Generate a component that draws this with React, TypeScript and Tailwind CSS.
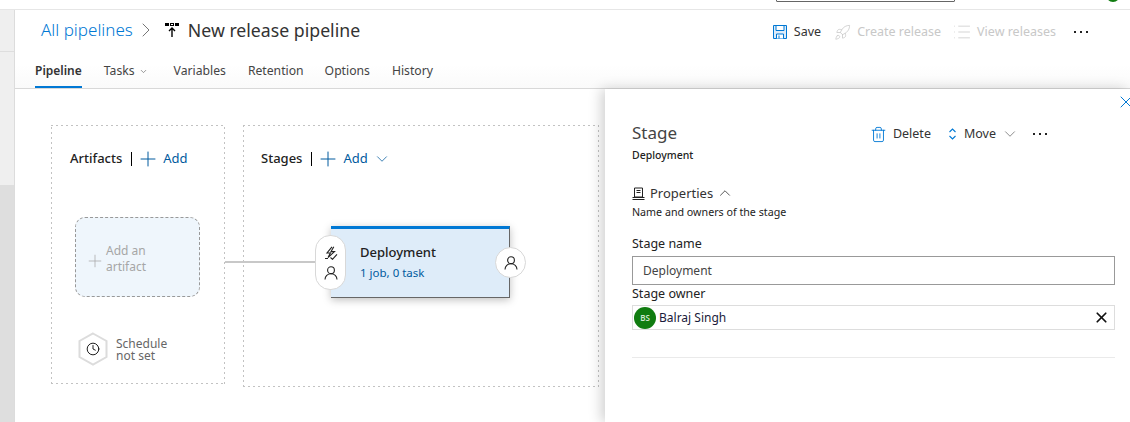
import { ChevronDown, ChevronUp, ChevronRight, Clock, List, Plus, Rocket, Trash2, X } from "lucide-react";

const tabs = ["Variables", "Retention", "Options", "History"];

// thin short dashes, finer than what border-dashed gives
const dashedBox =
  "[background:repeating-linear-gradient(90deg,#c2c2c2_0_2px,transparent_2px_5px)_top/100%_1px_no-repeat,repeating-linear-gradient(90deg,#c2c2c2_0_2px,transparent_2px_5px)_bottom/100%_1px_no-repeat,repeating-linear-gradient(0deg,#c2c2c2_0_2px,transparent_2px_5px)_left/1px_100%_no-repeat,repeating-linear-gradient(0deg,#c2c2c2_0_2px,transparent_2px_5px)_right/1px_100%_no-repeat]";

function PipelineIcon() {
  return (
    <svg width="14" height="14" viewBox="0 0 14 14" className="text-black">
      <path d="M0 0h4v3H0zM5 0h4v3H5zM10 0h4v3h-4z" fill="currentColor" />
      <path d="M6 1h2v1H6z" fill="#fff" />
      <path d="M7 14V5M4 8l3-3 3 3" fill="none" stroke="currentColor" strokeWidth="1.4" />
    </svg>
  );
}

function SaveIcon() {
  return (
    <svg width="14" height="14" viewBox="0 0 14 14" className="text-[#0078d4]">
      <path d="M.5.5h13v13H.5z" fill="#deecf9" stroke="currentColor" />
      <path d="M3 1v4.5h8V1M3.5 13.5V9h7v4.5" fill="#fff" stroke="currentColor" />
      <path d="M6 10.5v3" stroke="currentColor" />
    </svg>
  );
}

function Dots() {
  return (
    <svg width="14" height="2" viewBox="0 0 14 2" className="text-[#222]">
      <path d="M0 0h2v2H0zM6 0h2v2H6zM12 0h2v2h-2z" fill="currentColor" />
    </svg>
  );
}

function PersonIcon({ size = 14 }: { size?: number }) {
  return (
    <svg width={size} height={size} viewBox="0 0 14 14" fill="none" stroke="#222" strokeWidth="1.1">
      <circle cx="7" cy="4.2" r="3.4" />
      <path d="M1 13.5c0-3.4 2.6-5.8 6-5.8s6 2.4 6 5.8" />
    </svg>
  );
}

function TriggerIcon() {
  return (
    <svg width="14" height="14" viewBox="0 0 14 14" fill="none" stroke="#222" strokeWidth="1.1">
      <path d="M8 .8 3 7h3.4L4 11.5 10.5 5.6H7L9.8.8" />
      <path d="M1 12.5h3M6.5 11.5l2 1.8 4.5-5" />
    </svg>
  );
}

function ScheduleHex() {
  return (
    <div className="relative flex h-[34px] w-[30px] items-center justify-center">
      <svg width="30" height="34" viewBox="0 0 30 34" className="absolute inset-0">
        <path d="M15 1.5 28.5 9v16L15 32.5 1.5 25V9z" fill="#fff" stroke="#dcdcdc" strokeWidth="2" />
      </svg>
      <Clock size={14} strokeWidth={1.5} className="relative text-black" />
    </div>
  );
}

function AddButton({ chevron }: { chevron?: boolean }) {
  return (
    <>
      <span className="ml-[9px] h-[14px] w-px bg-black" />
      <Plus size={24} strokeWidth={1} className="ml-[4px] text-[#005a9e]" />
      <span className="ml-[3px] text-[#005a9e]">Add</span>
      {chevron && <ChevronDown size={18} strokeWidth={1} className="ml-[5px] text-[#005a9e]" />}
    </>
  );
}

function StageCard() {
  return (
    <div className="absolute left-[316px] top-[137px] h-[72px] w-[179px] border-r border-b border-[#666] border-t-[3px] border-t-[#0078d4] bg-[#deecf9] pl-[29px] pt-[14px] shadow-[0_2px_8px_rgba(0,0,0,0.25)]">
      <div className="text-[13px] font-medium leading-[18px] text-[#212121]">Deployment</div>
      <div className="mt-[4px] text-[11.5px] leading-[16px] text-[#005a9e]">1 job, 0 task</div>
      <div className="absolute left-[-16px] top-[6px] flex h-[55px] w-[31px] flex-col items-center justify-center gap-[6px] rounded-[15px] border border-[#d8d8d8] bg-white">
        <TriggerIcon />
        <PersonIcon />
      </div>
      <div className="absolute left-[164px] top-[18px] flex h-[31px] w-[31px] items-center justify-center rounded-full border border-[#d8d8d8] bg-white">
        <PersonIcon />
      </div>
    </div>
  );
}

function StagePanel() {
  return (
    <div className="absolute bottom-0 left-[590px] right-0 top-0 bg-white pl-[27px] pr-[15px] pt-[33px] text-[#333] shadow-[-4px_0_12px_rgba(0,0,0,0.18)]">
      <X size={20} strokeWidth={1.2} className="absolute right-[-6px] top-[3px] text-[#0078d4]" />
      <div className="flex items-start justify-between">
        <div>
          <div className="text-[17px] leading-[22px] text-[#444]">Stage</div>
          <div className="mt-[3px] text-[10.5px] font-medium leading-[16px] text-[#222]">Deployment</div>
        </div>
        <div className="mr-[68px] flex items-center pt-[1px] text-[12.5px] leading-[22px]">
          <Trash2 size={17} strokeWidth={1.3} className="text-[#0078d4]" />
          <span className="ml-[6px]">Delete</span>
          <svg width="9" height="12" viewBox="0 0 9 12" className="ml-[17px] text-[#0078d4]">
            <path d="M1.5 4 4.5 1l3 3M1.5 8l3 3 3-3" fill="none" stroke="currentColor" strokeWidth="1.1" />
          </svg>
          <span className="ml-[7px]">Move</span>
          <ChevronDown size={18} strokeWidth={0.9} className="ml-[5px] text-[#555]" />
          <span className="ml-[14px]"><Dots /></span>
        </div>
      </div>
      <div className="mt-[20px] flex items-center text-[13px] leading-[20px]">
        <svg width="13" height="13" viewBox="0 0 13 13" className="mr-[5px] text-[#222]">
          <path d="M2.5 1h8v9h-8zM4.5 3.5h4M4.5 5.5h4M.5 12.5h12M.5 10.5h12" fill="none" stroke="currentColor" />
        </svg>
        Properties
        <ChevronUp size={18} strokeWidth={1} className="ml-[3px] text-[#222]" />
      </div>
      <div className="mt-[1px] text-[10.7px] leading-[16px] text-[#222]">Name and owners of the stage</div>
      <div className="mt-[16px] text-[12.5px] leading-[16px] text-[#222]">Stage name</div>
      <div className="mt-[4px] flex h-[29px] items-center border border-[#999] pl-[10px] text-[12px] text-[#444]">Deployment</div>
      <div className="text-[12.5px] leading-[17px] text-[#222]">Stage owner</div>
      <div className="mt-[3px] flex h-[25px] items-center border border-[#ddd] pl-px pr-[4px] text-[12px] text-[#1a1a3a]">
        <span className="flex h-[22px] w-[22px] items-center justify-center rounded-full bg-[#107c10] text-[8px] font-semibold text-[#cfe6cf]">BS</span>
        <span className="ml-[3px]">Balraj Singh</span>
        <X size={17} strokeWidth={2.4} className="ml-auto text-[#111]" />
      </div>
      <div className="mt-[27px] h-px bg-[#eaeaea]" />
    </div>
  );
}

export default function App() {
  return (
    <div className="relative h-[422px] w-[1130px] overflow-hidden bg-white font-['Noto_Sans','Open_Sans',sans-serif]">
      <div className="relative h-[10px] border-b border-[#e6e6e6]">
        <div className="absolute left-[776px] top-[-4px] h-[6px] w-[179px] rounded-[1px] border border-[#666]" />
        <div className="absolute left-[1106px] top-[-12px] h-[14px] w-[14px] rounded-full bg-[#107c10]" />
      </div>
      <div className="flex h-[412px]">
        <div className="flex w-[15px] flex-col border-r border-[#dcdcdc] bg-[#efefef]">
          <div className="h-[42px] border-b border-[#dedede]" />
          <div className="h-[133px]" />
          <div className="grow bg-[#dedede]" />
        </div>
        <div className="min-w-0 grow">
          <div className="h-[79px] border-b border-[#d8d8d8] bg-gradient-to-b from-white from-70% to-[#fafafa]">
            <div className="flex h-[40px] items-center pl-[26px]">
              <span className="text-[17px] font-light text-[#0078d4]">All pipelines</span>
              <ChevronRight size={24} strokeWidth={0.9} className="ml-px text-[#666]" />
              <span className="ml-[7px]"><PipelineIcon /></span>
              <span className="ml-[9px] text-[17.7px] text-[#333]">New release pipeline</span>
              <div className="ml-auto mr-[42px] flex items-center pt-[4px] text-[12.5px]">
                <SaveIcon />
                <span className="ml-[7px] text-[#333]">Save</span>
                <Rocket size={17} strokeWidth={1.2} className="ml-[13px] text-[#ccc]" />
                <span className="ml-[6px] text-[#c8c8c8]">Create release</span>
                <List size={20} strokeWidth={1} className="ml-[11px] text-[#ccc]" />
                <span className="ml-[5px] text-[#c8c8c8]">View releases</span>
                <span className="ml-[18px]"><Dots /></span>
              </div>
            </div>
            <div className="flex h-[38px] items-center pl-[20px] pt-[4px] text-[12.2px] text-[#444]">
              <span className="relative flex h-full items-center text-[12px] font-semibold text-[#333]">
                Pipeline
                <span className="absolute bottom-0 left-0 right-0 h-[2px] bg-[#0078d4]" />
              </span>
              <span className="ml-[22px]">Tasks</span>
              <ChevronDown size={9} className="ml-[4px] text-[#777]" />
              <span className="ml-[26px]">{tabs[0]}</span>
              <span className="ml-[22px]">{tabs[1]}</span>
              <span className="ml-[21px]">{tabs[2]}</span>
              <span className="ml-[22px]">{tabs[3]}</span>
            </div>
          </div>
          <div className="relative h-[333px]">
            <div className="flex items-start gap-[18px] pl-[36px] pt-[36px]">
              <div className={`h-[259px] w-[174px] pl-[19px] pt-[22px] ${dashedBox}`}>
                <div className="flex h-[24px] items-center text-[13px] font-medium text-[#222]">
                  Artifacts
                  <span className="flex items-center font-normal"><AddButton /></span>
                </div>
                <div className="ml-[5px] mt-[46px] flex h-[80px] w-[125px] items-center rounded-[10px] border border-dashed border-[#999] bg-[#eff6fc] pl-[9px] pt-[3px] text-[12px] leading-[16px] text-[#a6a6a6]">
                  <Plus size={20} strokeWidth={0.9} className="mt-[5px] text-[#a6a6a6]" />
                  <span className="ml-px">Add an<br />artifact</span>
                </div>
                <div className="ml-[8px] mt-[35px] flex items-center text-[12px] leading-[12px] text-[#666]">
                  <ScheduleHex />
                  <span className="ml-[8px] pt-[2px]">Schedule<br />not set</span>
                </div>
              </div>
              <div className={`h-[262px] w-[356px] pl-[18px] pt-[22px] ${dashedBox}`}>
                <div className="flex h-[24px] items-center text-[13px] font-medium text-[#222]">
                  Stages
                  <span className="flex items-center font-normal"><AddButton chevron /></span>
                </div>
              </div>
            </div>
            <div className="absolute left-[210px] top-[172px] h-[2px] w-[90px] bg-[#c8c8c8]" />
            <StageCard />
            <StagePanel />
          </div>
        </div>
      </div>
    </div>
  );
}
